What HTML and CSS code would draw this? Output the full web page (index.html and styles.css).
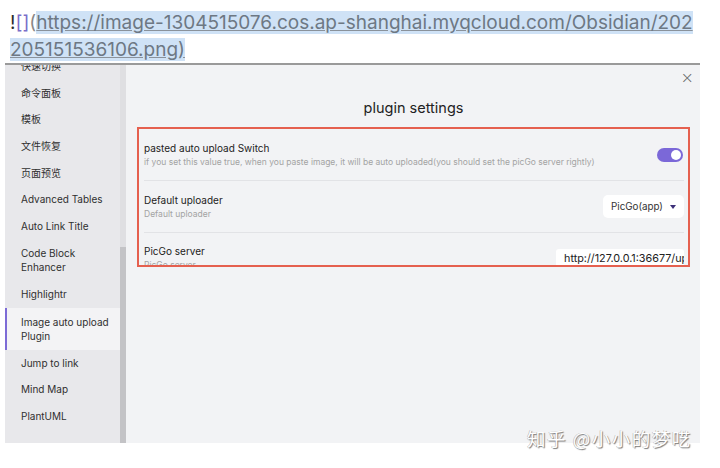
FILE: index.html
```html
<!DOCTYPE html>
<html>
<head>
<meta charset="utf-8">
<link rel="stylesheet" href="styles.css">
</head>
<body>
<div class="page">
  <p class="md"><span class="bang">!</span><span class="brk">[]</span><span class="paren">(</span><span class="link">https://image-1304515076.cos.ap-shanghai.myqcloud.com/Obsidian/202<br>205151536106.png)</span></p>
  <div class="rule"></div>
  <div class="shot">
    <aside class="side">
      <ul class="nav">
        <li>快速切换</li>
        <li>命令面板</li>
        <li>模板</li>
        <li>文件恢复</li>
        <li>页面预览</li>
        <li>Advanced Tables</li>
        <li>Auto Link Title</li>
        <li class="two">Code Block<br>Enhancer</li>
        <li>Highlightr</li>
        <li class="two active">Image auto upload<br>Plugin</li>
        <li>Jump to link</li>
        <li>Mind Map</li>
        <li>PlantUML</li>
      </ul>
    </aside>
    <div class="scroll"><div class="thumb"></div></div>
    <main class="panel">
      <div class="close">×</div>
      <h2 class="title">plugin settings</h2>
      <div class="box">
        <div class="item">
          <div class="info">
            <div class="name">pasted auto upload Switch</div>
            <div class="desc">if you set this value true, when you paste image, it will be auto uploaded(you should set the picGo server rightly)</div>
          </div>
          <div class="toggle"><span class="knob"></span></div>
        </div>
        <div class="item">
          <div class="info">
            <div class="name">Default uploader</div>
            <div class="desc">Default uploader</div>
          </div>
          <div class="select">PicGo(app)<span class="caret"></span></div>
        </div>
        <div class="item last">
          <div class="info">
            <div class="name">PicGo server</div>
            <div class="desc">PicGo server</div>
          </div>
          <div class="input">http://127.0.0.1:36677/upload</div>
        </div>
      </div>
    </main>
  </div>
  <div class="watermark">知乎 @小小的梦呓</div>
</div>
</body>
</html>
```

FILE: styles.css
```css
html, body {
  margin: 0;
  padding: 0;
  background: #ffffff;
}
body {
  font-family: Inter, "Noto Sans CJK SC", sans-serif;
  width: 720px;
  height: 468px;
  overflow: hidden;
}
.page {
  position: relative;
  width: 720px;
  height: 468px;
}
.md {
  margin: 0;
  padding: 9px 0 0 10px;
  height: 54px;
  font-size: 19px;
  line-height: 27px;
  color: #333;
  white-space: nowrap;
}
.bang { color: #2b2b2b; }
.brk { color: #7a6fc9; }
.paren { color: #888; }
.link {
  color: #6d7884;
  text-decoration: underline;
  text-decoration-color: #8a929b;
  background: #cfe2f6;
}
.rule {
  margin: 0 20px 0 5px;
  height: 2px;
  background: #9a9a9a;
}
.shot {
  display: flex;
  margin-left: 5px;
  width: 695px;
  height: 378px;
  overflow: hidden;
}
.side {
  width: 115px;
  background: #e8e8eb;
  overflow: hidden;
}
.nav {
  list-style: none;
  margin: -12px 0 0 0;
  padding: 0;
  font-size: 10px;
  color: #2f2f2f;
}
.nav li {
  padding: 0 4px 0 16px;
  height: 26.7px;
  line-height: 26.7px;
  white-space: nowrap;
}
.nav li.two {
  height: auto;
  line-height: 14px;
  padding-top: 6px;
  padding-bottom: 7px;
}
.nav li.active {
  background: #f3f3f5;
  border-left: 2px solid #7d6bd6;
  padding-left: 14px;
  padding-top: 7px;
  padding-bottom: 7px;
}
.scroll {
  width: 6px;
  background: #dfdfe2;
  display: flex;
  flex-direction: column;
  justify-content: flex-end;
}
.thumb {
  height: 196px;
  background: #c3c3c6;
}
.panel {
  flex: 1;
  background: #f2f3f5;
  position: relative;
  padding: 0 10px 0 11px;
}
.close {
  position: absolute;
  right: 6px;
  top: 3px;
  font-size: 16px;
  color: #666;
  font-family: "DejaVu Sans", sans-serif;
  font-weight: 300;
}
.title {
  margin: 0;
  padding-top: 33px;
  height: 28px;
  line-height: 20px;
  text-align: center;
  font-size: 14.5px;
  font-weight: 400;
  color: #222;
}
.box {
  margin-top: 1px;
  height: 136px;
  border: 2px solid #e5604f;
  padding: 0 4px 0 5px;
  overflow: hidden;
}
.item {
  display: flex;
  align-items: center;
  justify-content: space-between;
  height: 51px;
  border-bottom: 1px solid #e2e3e6;
}
.item.last { border-bottom: none; }
.name {
  font-size: 10px;
  color: #222;
  line-height: 14px;
}
.desc {
  font-size: 8.5px;
  color: #a3a3a3;
  line-height: 14px;
}
.toggle {
  width: 26px;
  height: 14px;
  border-radius: 7px;
  background: #7b68d8;
  position: relative;
  margin-right: 1px;
}
.knob {
  position: absolute;
  right: 2px;
  top: 2px;
  width: 10px;
  height: 10px;
  border-radius: 50%;
  background: #fff;
}
.select {
  width: 81px;
  height: 23px;
  box-sizing: border-box;
  background: #fff;
  border-radius: 5px;
  font-size: 9.8px;
  color: #333;
  line-height: 23px;
  padding: 0 8px 0 8px;
  display: flex;
  align-items: center;
  justify-content: space-between;
}
.caret {
  width: 0;
  height: 0;
  border-left: 3.5px solid transparent;
  border-right: 3.5px solid transparent;
  border-top: 4px solid #3c2f78;
}
.last { align-items: flex-start; padding-top: 11px; box-sizing: border-box; }
.input {
  margin-top: 5px;
  width: 128px;
  height: 22px;
  box-sizing: border-box;
  background: #fff;
  border-radius: 3px;
  font-size: 10.8px;
  color: #222;
  line-height: 20px;
  padding-left: 8px;
  white-space: nowrap;
  overflow: hidden;
}
.watermark {
  position: absolute;
  left: 527px;
  top: 425px;
  font-size: 18.5px;
  color: #ffffff;
  letter-spacing: 1.5px;
  font-family: "Noto Sans CJK SC", sans-serif;
  text-shadow: 1px 1px 1px #7a7a7a, -0.5px -0.5px 0 #b0b0b0;
}
```
